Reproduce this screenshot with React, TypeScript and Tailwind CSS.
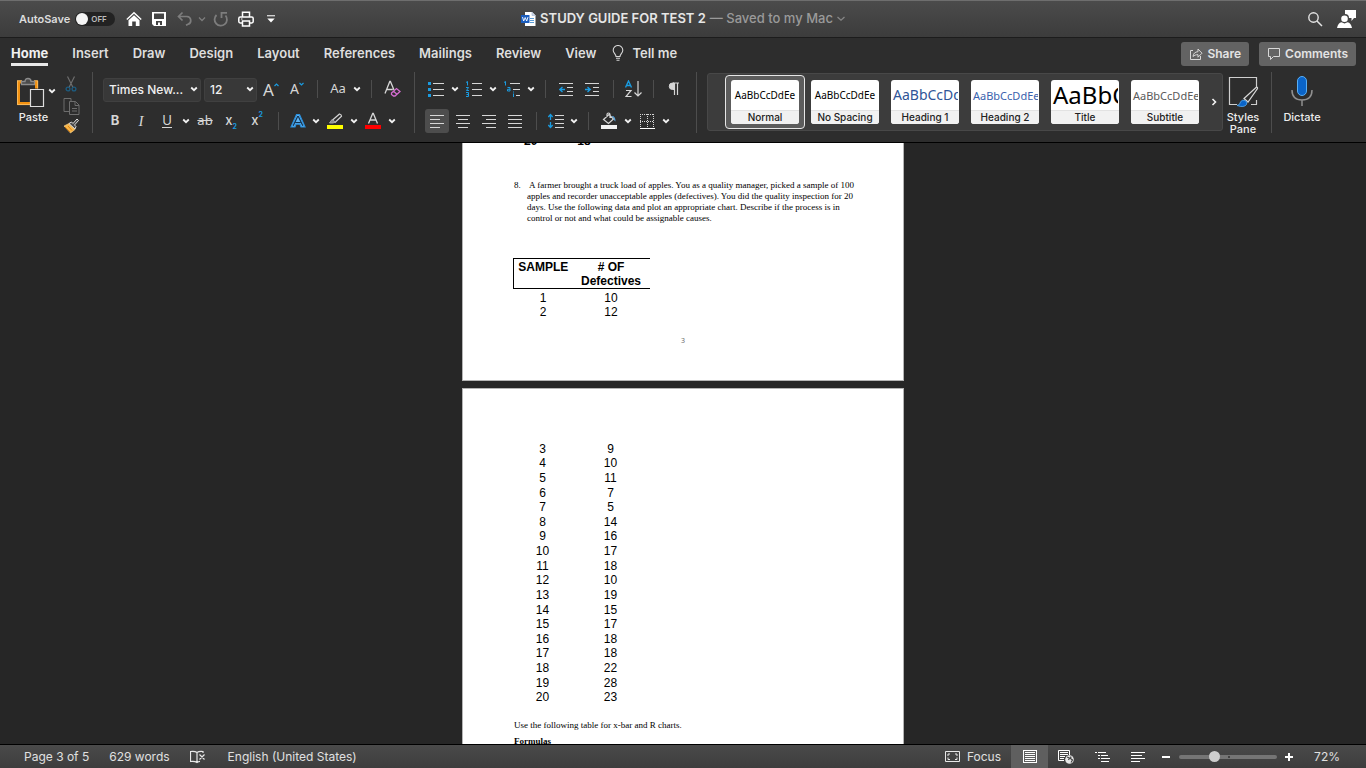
import { useState } from 'react'
import type { ReactNode } from 'react'
import clsx from 'clsx'

const tabs = ['Home', 'Insert', 'Draw', 'Design', 'Layout', 'References', 'Mailings', 'Review', 'View']

const styleCards = [
  { name: 'Normal', preview: 'text-[10px] text-black justify-center' },
  { name: 'No Spacing', preview: 'text-[10px] text-black justify-center' },
  { name: 'Heading 1', preview: 'text-[14px] text-[#2f5597] pl-px' },
  { name: 'Heading 2', preview: 'text-[11px] text-[#3a62ad] pl-px' },
  { name: 'Title', preview: 'text-[24px] text-black pl-px' },
  { name: 'Subtitle', preview: 'text-[11px] text-[#5a5a5a] pl-px' },
]

const firstRows = [[1, 10], [2, 12]]

const secondRows = [
  [3, 9], [4, 10], [5, 11], [6, 7], [7, 5], [8, 14], [9, 16], [10, 17], [11, 18],
  [12, 10], [13, 19], [14, 15], [15, 17], [16, 18], [17, 18], [18, 22], [19, 28], [20, 23],
]

interface IIconProps {
  w?: number
  h?: number
  crisp?: boolean
  children: ReactNode
}

const Icon = ({ w = 16, h = 16, crisp, children }: IIconProps) => (
  <svg
    width={w}
    height={h}
    viewBox={`0 0 ${w} ${h}`}
    fill="none"
    stroke="currentColor"
    shapeRendering={crisp ? 'crispEdges' : 'auto'}
    className="shrink-0"
    aria-hidden="true"
  >
    {children}
  </svg>
)

interface IToolProps {
  label: string
  className?: string
  children: ReactNode
}

const Tool = ({ label, className, children }: IToolProps) => (
  <button
    type="button"
    aria-label={label}
    title={label}
    className={clsx('flex h-6 shrink-0 items-center justify-center text-[#d6d6d6]', className ?? 'w-[26px]')}
  >
    {children}
  </button>
)

const CaretIcon = () => (
  <Icon w={8} h={6}>
    <path d="M1.2 1.5 4 4.2 6.8 1.5" stroke="#f2f2f2" strokeWidth="1.8" />
  </Icon>
)

const Caret = ({ label }: { label: string }) => (
  <Tool label={label} className="w-3"><CaretIcon /></Tool>
)

const Divider = () => (
  <div className="flex h-[18px] w-4 shrink-0 justify-center"><div className="w-px bg-[#4d4d4d]" /></div>
)

const GroupDivider = () => <div className="h-[61px] w-px shrink-0 bg-[#4d4d4d]" />

// horizontal text lines, each one as [x1, x2]
const Lines = ({ rows, gap = 4, top = 2 }: { rows: number[][]; gap?: number; top?: number }) => (
  <>
    {rows.map(([a, b], i) => (
      <path key={i} d={`M${a} ${top + 0.5 + i * gap}H${b}`} />
    ))}
  </>
)

const WordIcon = () => (
  <Icon w={15} h={16}>
    <path d="M4 1h7l3.5 3.5V15H4z" fill="#fff" stroke="none" />
    <path d="M11 1v3.5h3.5" fill="#cfd8e6" stroke="#9fb4d4" strokeWidth=".6" />
    <path d="M9 7.5h4M9 9.5h4M9 11.5h4" stroke="#5b9bd5" />
    <path d="M0 4h8.5v8H0z" fill="#1b5dbe" stroke="none" />
    <path d="m1.5 6 1.2 4L4.2 6.5 5.7 10 7 6" stroke="#fff" strokeWidth=".9" />
  </Icon>
)

const TitleBar = () => {
  const [autoSave, setAutoSave] = useState(false)
  return (
    <header className="grid h-[38px] shrink-0 grid-cols-[1fr_auto_1fr] items-center border-t border-b border-t-[#6e6e6e] border-b-[#1c1c1c] bg-linear-to-b from-[#4b4b4b] to-[#3c3c3c]">
      <div className="flex items-center pl-[19px] text-white">
        <label htmlFor="autosave" className="text-[11px] font-semibold text-[#dcdcdc]">AutoSave</label>
        <div className="relative ml-[5px] flex h-[14px] w-10 items-center">
          <input
            id="autosave"
            type="checkbox"
            role="switch"
            checked={autoSave}
            onChange={(e) => setAutoSave(e.target.checked)}
            className="h-[14px] w-10 appearance-none rounded-full bg-[#222]"
          />
          <span className="pointer-events-none absolute left-px size-3 rounded-full bg-[#f4f4f4]" />
          <span className="pointer-events-none absolute left-4 text-[8px] font-semibold text-[#bdbdbd]">{autoSave ? 'ON' : 'OFF'}</span>
        </div>
        <div className="ml-[9px] flex items-center">
          <Tool label="Home" className="w-5">
            <Icon>
              <path d="M.8 8.5 8 1.8l7.2 6.700" stroke="#fff" strokeWidth="1.5" />
              <path d="M2.5 9.3 8 4.3l5.5 5V15H9.8v-4.5H6.2V15H2.5z" fill="#fff" stroke="none" />
            </Icon>
          </Tool>
          <Tool label="Save" className="ml-[5px] w-5">
            <Icon w={14} h={14}>
              <path d="M0 0h14v14H2l-2-2zM2 1.5V7h10V1.5zM4 9v4h2v-2.500h2V13h2V9z" fill="#fff" fillRule="evenodd" stroke="none" />
            </Icon>
          </Tool>
          <Tool label="Undo" className="ml-[6px] w-5">
            <Icon>
              <path d="M5.5 1.5 1.5 5.5l4 4M1.5 5.5H10a4 4 0 0 1 1 7.8l-2 1" stroke="#7d7d7d" strokeWidth="1.7" />
            </Icon>
          </Tool>
          <Tool label="Undo options" className="w-[14px]">
            <Icon w={8} h={6}><path d="M1 1.5 4 4.5l3-3" stroke="#7d7d7d" strokeWidth="1.3" /></Icon>
          </Tool>
          <Tool label="Repeat" className="ml-[2px] w-5">
            <Icon>
              <path d="M3.5 4A6.2 6.2 0 1 0 12.5 4.5M8.5 7V1.8H14" stroke="#7d7d7d" strokeWidth="1.8" />
            </Icon>
          </Tool>
          <Tool label="Print" className="ml-[5px] w-5">
            <Icon>
              <path d="M4.5 6V1.2h7V6M4.5 12H2.2Q.8 12 .8 10.6V7.4Q.8 6 2.2 6h11.6q1.4 0 1.4 1.4v3.2q0 1.4-1.4 1.4h-2.300M4.5 10h7v5h-7z" stroke="#fff" strokeWidth="1.5" />
              <path d="M3 8h1.5" stroke="#fff" />
            </Icon>
          </Tool>
          <Tool label="Customize toolbar" className="ml-[5px] w-5">
            <Icon w={8} h={8}>
              <path d="M0 .7h8" stroke="#d0d0d0" strokeWidth="1.4" />
              <path d="M.3 3.5h7.4L4 7.6z" fill="#fff" stroke="none" />
            </Icon>
          </Tool>
        </div>
      </div>
      <button type="button" className="flex items-center text-[13px] whitespace-nowrap">
        <WordIcon />
        <span className="ml-1 font-semibold text-[#e6e6e6]">STUDY GUIDE FOR TEST 2</span>
        <span className="mx-1 font-medium text-[#9a9a9a]">— Saved to my Mac</span>
        <Icon w={8} h={6}><path d="M.5 1 4 4.2 7.5 1" stroke="#858585" strokeWidth="1.3" /></Icon>
      </button>
      <div className="flex items-center justify-end pr-[9px]">
        <Tool label="Search">
          <Icon>
            <circle cx="6.5" cy="6.5" r="4.7" stroke="#e4e4e4" strokeWidth="1.4" />
            <path d="m10 10 5 5" stroke="#e4e4e4" strokeWidth="1.5" />
          </Icon>
        </Tool>
        <Tool label="Account" className="ml-[7px] w-[22px]">
          <Icon w={20} h={20}>
            <path d="M9 1h11v8h-2l-2.5 3V9H13a4 4 0 0 0-4-4z" fill="#fff" stroke="none" />
            <circle cx="8.5" cy="9.8" r="3.3" fill="#fff" stroke="none" />
            <path d="M1 19q1-5.3 4.500-5.8l3 1.3 3-1.3Q15 13.7 16 19z" fill="#fff" stroke="none" />
          </Icon>
        </Tool>
      </div>
    </header>
  )
}

const TabBar = () => {
  const [active, setActive] = useState('Home')
  const box = 'flex h-6 items-center gap-1 rounded-[3px] bg-[#636363] px-2 text-[12px] font-semibold text-[#e4e4e4]'
  return (
    <nav className="flex h-[34px] shrink-0 items-start justify-between pr-[10px] pl-[11px]">
      <div className="flex gap-6 pt-1 text-[13px] leading-5 font-semibold text-[#dedede]">
        {tabs.map((tab) => (
          <button
            key={tab}
            type="button"
            onClick={() => setActive(tab)}
            className={clsx('h-6 border-b-[3px]', active === tab ? 'border-[#e8e8e8] font-bold text-[#f0f0f0]' : 'border-transparent')}
          >
            {tab}
          </button>
        ))}
        <button type="button" className="-ml-2 flex h-6 items-center gap-2 pb-[3px]">
          <Icon w={12} h={16}>
            <path d="M4 11.5C4 9 1.2 8.2 1.2 5.3a4.8 4.8 0 0 1 9.6 0C10.8 8.2 8 9 8 11.5zM4 13.3h4M4.5 15.2h3" stroke="#d6d6d6" strokeWidth="1.1" />
          </Icon>
          Tell me
        </button>
      </div>
      <div className="flex gap-[10px] pt-1">
        <button type="button" className={box}>
          <Icon w={14} h={14}>
            <path d="M4 3.5H1.5v9h10V9M4 9.5c.3-3 2-4.6 5-4.8V2l4 4.2-4 4V7.7C7 7.6 5.2 8.2 4 9.5z" stroke="#d8d8d8" />
          </Icon>
          Share
        </button>
        <button type="button" className={box}>
          <Icon w={14} h={14}><path d="M1.500 1.5h11v8h-6l-3 3v-3h-2z" stroke="#d8d8d8" /></Icon>
          Comments
        </button>
      </div>
    </nav>
  )
}

const Picker = ({ label, value, className }: { label: string; value: string; className: string }) => (
  <div className={clsx('relative shrink-0', className)}>
    <select
      aria-label={label}
      defaultValue={value}
      className="h-6 w-full appearance-none rounded-[3px] border border-[#404040] bg-[#383838] pl-[5px] text-[12px] font-medium text-[#f0f0f0]"
    >
      <option>{value}</option>
    </select>
    <span className="pointer-events-none absolute inset-y-0 right-[3px] flex items-center"><CaretIcon /></span>
  </div>
)

const ClipboardGroup = () => (
  <div className="flex w-[92px] shrink-0 pl-[14px]">
    <button type="button" className="flex w-[39px] flex-col items-center text-[11px] leading-3 font-medium text-[#ececec]">
      <span className="flex h-[39px] w-full pt-[5px] pl-[3px]">
        <Icon w={28} h={30}>
          <path d="M5 5H1.500v21.500H13M17 5h2.500v6.500" stroke="#f29111" strokeWidth="3" />
          <path d="M.4 3.500v24.100H13M.4 3.800H5M17 3.800h3.700v7.700" stroke="#ffc873" strokeWidth=".8" />
          <path d="M4.500 7.500v-3H8q0-3 3-3t3 3h3.500v3z" fill="#4a4a4a" stroke="#8c8c8c" strokeWidth="1.300" />
          <path d="M13.500 12.500h13v17h-13z" fill="#2d2d2d" stroke="#dedede" strokeWidth="1.200" />
        </Icon>
      </span>
      Paste
    </button>
    <div className="-ml-[7px] pt-[7px]"><Caret label="Paste options" /></div>
    <div className="ml-[3px] flex w-5 flex-col items-center pt-px">
      <Tool label="Cut" className="h-[22px] w-5">
        <Icon w={12} h={16}>
          <path d="M2.500.5 8 11.500M9.500.5 4 11.500" stroke="#6d6d6d" strokeWidth="1.200" />
          <circle cx="3" cy="13" r="1.900" stroke="#1d5c80" strokeWidth="1.300" />
          <circle cx="9" cy="13" r="1.900" stroke="#1d5c80" strokeWidth="1.300" />
        </Icon>
      </Tool>
      <Tool label="Copy" className="h-[22px] w-5">
        <Icon w={17} h={17}>
          <path d="M6 13.500H1V.5h7v3M6.500 3.500h6l3.500 3.500v9.500H6.500zM12 3.500v4h4M9 10.500h5M9 13h5" stroke="#6d6d6d" />
        </Icon>
      </Tool>
      <Tool label="Format painter" className="h-[18px] w-5">
        <Icon>
          <path d="M1 8 6 5.500l6 6L7.500 15z" fill="#f7b64a" stroke="#ffd894" strokeWidth=".6" />
          <path d="m2 9 5 5M5 8l4 4.500" stroke="#d97f10" />
          <path d="M6 5.500 8.500 4 10 5.500 14 1l1.500 1.500L11.500 7 13 8.500 12 11z" fill="#4a4a4a" stroke="#dcdcdc" />
        </Icon>
      </Tool>
    </div>
  </div>
)

const letter = 'font-["Noto_Sans"]'

const FontGroup = () => (
  <div className="w-[321px] shrink-0 pt-px pl-[9px]">
    <div className="flex h-8 items-center pl-px">
      <Picker label="Font" value="Times New..." className="w-[98px]" />
      <Picker label="Font size" value="12" className="ml-[3px] w-[53px]" />
      <Tool label="Increase font size" className="w-7">
        <span className={clsx(letter, 'text-[17px] leading-none')}>A</span>
        <Icon w={5} h={14}><path d="m.5 4 2-2 2 2" stroke="#1a9be0" strokeWidth="1.200" /></Icon>
      </Tool>
      <Tool label="Decrease font size" className="w-6">
        <span className={clsx(letter, 'text-[14px] leading-none')}>A</span>
        <Icon w={5} h={14}><path d="m.5 1 2 2 2-2" stroke="#1a9be0" strokeWidth="1.200" /></Icon>
      </Tool>
      <Divider />
      <Tool label="Change case"><span className={clsx(letter, 'text-[13px]')}>Aa</span></Tool>
      <Caret label="Change case options" />
      <Divider />
      <Tool label="Clear formatting">
        <Icon w={17} h={18}>
          <path d="M1 13.500 5.800 1.500h.6L10 10M2.800 9.500h6" strokeWidth="1.300" />
          <path d="m7.500 13 5-4.500 3.500 3-5 4.500H9.500l-2-1.500zM9.500 11.200l3.500 3" stroke="#d46cd0" strokeWidth="1.300" />
        </Icon>
      </Tool>
    </div>
    <div className="flex h-8 items-center">
      <Tool label="Bold"><span className="text-[13px] font-bold">B</span></Tool>
      <Tool label="Italic"><span className='font-["Liberation_Serif"] text-[15px] italic'>I</span></Tool>
      <Tool label="Underline"><span className="border-b border-[#d6d6d6] text-[13px] leading-[13px]">U</span></Tool>
      <Caret label="Underline options" />
      <Tool label="Strikethrough"><span className={clsx(letter, 'text-[13px] line-through')}>ab</span></Tool>
      <Tool label="Subscript">
        <span className="text-[13px] font-medium">x</span>
        <span className="pt-3 text-[7px] font-bold text-[#1a9be0]">2</span>
      </Tool>
      <Tool label="Superscript">
        <span className="text-[13px] font-medium">x</span>
        <span className="pb-3 text-[7px] font-bold text-[#1a9be0]">2</span>
      </Tool>
      <Divider />
      <Tool label="Text effects" className="w-6">
        <Icon w={16} h={16}>
          <path d="M1 14 6.500 1.500h3L15 14h-4l-1-2.800H6L5 14z" fill="#5db2f2" stroke="#2a8fdc" strokeWidth="1.200" />
          <path d="M3.200 12.700 7.600 3.500h.8l4.400 9.200M5.500 9.500h5" stroke="#12324f" strokeWidth="1.200" />
        </Icon>
      </Tool>
      <Caret label="Text effects options" />
      <Tool label="Highlight">
        <Icon w={16} h={18}>
          <path d="M5 8.500 12.500 2q2 .5 2 2.200L8 10.500z" stroke="#d6d6d6" strokeWidth="1.200" />
          <path d="M5 7.500 2.500 11H6l2.500-1z" fill="#8c8c8c" stroke="#a8a8a8" />
          <path d="M0 13h16v4H0z" fill="#ffff00" stroke="none" />
        </Icon>
      </Tool>
      <Caret label="Highlight options" />
      <Tool label="Font color">
        <Icon w={16} h={18}>
          <path d="M3.500 11.500 7.700 1.500h.6l4.200 10M5 8h6" strokeWidth="1.300" />
          <path d="M0 13h16v4H0z" fill="#ff0000" stroke="none" />
        </Icon>
      </Tool>
      <Caret label="Font color options" />
    </div>
  </div>
)

const ParagraphGroup = () => (
  <div className="w-[281px] shrink-0 pt-px pl-[8px]">
    <div className="flex h-8 items-center">
      <Tool label="Bullets">
        <Icon crisp>
          <Lines rows={[[5, 16], [5, 16], [5, 16]]} gap={6} />
          <path d="M0 1h3v3H0zM0 7h3v3H0zM0 13h3v3H0z" fill="#1a9be0" stroke="none" />
        </Icon>
      </Tool>
      <Caret label="Bullets options" />
      <Tool label="Numbering">
        <Icon>
          <Lines rows={[[6, 16], [6, 16], [6, 16]]} gap={6} />
          <path d="m0 1.500 1.500-1V4.500M0 6.500h2.500L.5 9.500h2.500M0 11.500h2.500v4H0M.5 13.500h2" stroke="#1a9be0" />
        </Icon>
      </Tool>
      <Caret label="Numbering options" />
      <Tool label="Multilevel list">
        <Icon>
          <path d="M6 2.500h10M9 8.500h7M12 14.500h4" />
          <path d="M0 1.500 1.500.5V4.500M3.500 6.500H6v3.500H3.500V8.300H6M9.500 12.500v4M9.500 10.500v1" stroke="#1a9be0" />
        </Icon>
      </Tool>
      <Caret label="Multilevel list options" />
      <Divider />
      <Tool label="Decrease indent">
        <Icon w={14} h={14}>
          <path d="M0 1.500h14M8 5.500h6M8 9.500h6M0 13.500h14" />
          <path d="M.8 7.500H6M3.500 5 .8 7.500l2.700 2.500" stroke="#1a9be0" strokeWidth="1.400" />
        </Icon>
      </Tool>
      <Tool label="Increase indent">
        <Icon w={14} h={14}>
          <path d="M0 1.500h14M8 5.500h6M8 9.500h6M0 13.500h14" />
          <path d="M0 7.500h5.200M2.500 5l2.700 2.500L2.500 10" stroke="#1a9be0" strokeWidth="1.400" />
        </Icon>
      </Tool>
      <Divider />
      <Tool label="Sort" className="w-6">
        <Icon w={17} h={18}>
          <path d="M.5 7.500 3.500 1l3 6.500M1.500 5.500h4" stroke="#1a9be0" strokeWidth="1.400" />
          <path d="M1 10.500h5l-5 6h5.500" strokeWidth="1.200" />
          <path d="M13 1v15M9.500 12.500 13 16l3.500-3.500" strokeWidth="1.200" />
        </Icon>
      </Tool>
      <Divider />
      <Tool label="Show paragraph marks">
        <Icon w={12} h={14}>
          <path d="M5 1h6M6.500 1v12M9.500 1v12" strokeWidth="1.200" />
          <path d="M6 1v6.500H4.500a3.200 3.200 0 0 1 0-6.500z" fill="currentColor" />
        </Icon>
      </Tool>
    </div>
    <div className="flex h-8 items-center pl-px">
      <Tool label="Align left" className="mx-px w-6 rounded-[3px] bg-[#4d4d4d]">
        <Icon w={14} h={16} crisp><Lines rows={[[0, 14], [0, 10], [0, 14], [0, 10]]} /></Icon>
      </Tool>
      <Tool label="Center">
        <Icon w={14} h={16} crisp><Lines rows={[[0, 14], [2, 12], [0, 14], [2, 12]]} /></Icon>
      </Tool>
      <Tool label="Align right">
        <Icon w={14} h={16} crisp><Lines rows={[[0, 14], [4, 14], [0, 14], [4, 14]]} /></Icon>
      </Tool>
      <Tool label="Justify">
        <Icon w={14} h={16} crisp><Lines rows={[[0, 14], [0, 14], [0, 14], [0, 14]]} /></Icon>
      </Tool>
      <Divider />
      <Tool label="Line spacing" className="w-6">
        <Icon>
          <Lines rows={[[7, 16], [7, 16], [7, 16], [7, 16]]} />
          <path d="M2.500 1.500V7M.3 4l2.200-2.500L4.700 4M2.500 9v5.500M.3 12l2.200 2.500L4.700 12" stroke="#1a9be0" strokeWidth="1.300" />
        </Icon>
      </Tool>
      <Caret label="Line spacing options" />
      <Divider />
      <Tool label="Shading">
        <Icon w={16} h={18}>
          <path d="m2.500 7.500 5.500-5 4.500 4.500-5 4.500zM6 5V2.500Q6 1 7.500 1t1.500 1.500V6" stroke="#d6d6d6" strokeWidth="1.200" />
          <path d="M10.500 4q4-.5 4 5.500-2-.5-2-3.500z" fill="#5aa5dc" stroke="none" />
          <path d="M0 13h16v4H0z" fill="#f2f2f2" stroke="none" />
        </Icon>
      </Tool>
      <Caret label="Shading options" />
      <Tool label="Borders">
        <Icon crisp>
          <path d="M1 1.500h14M1 8.500h14M1.500 1v13M8.500 1v13M14.500 1v13" strokeDasharray="1 1" />
          <path d="M1 15.500h15" stroke="#fff" />
        </Icon>
      </Tool>
      <Caret label="Borders options" />
    </div>
  </div>
)

const StylesGallery = () => {
  const [selected, setSelected] = useState('Normal')
  return (
    <div className="mt-px ml-[10px] flex h-[58px] shrink-0 items-center rounded-[3px] border border-[#484848] bg-[#3c3c3c] pl-[17px]">
      {styleCards.map((card) => (
        <button
          key={card.name}
          type="button"
          onClick={() => setSelected(card.name)}
          className={clsx(
            'h-[54px] w-20 rounded-[4px] border p-1',
            selected === card.name ? 'border-[#e6e6e6] bg-[#5c5c5c]' : 'border-transparent',
          )}
        >
          <span className="mx-px flex h-full flex-col overflow-hidden rounded-[3px] bg-white">
            <span className={clsx('mx-px flex flex-1 items-center overflow-hidden font-["Noto_Sans"] leading-none', card.preview)}>
              AaBbCcDdEe
            </span>
            <span className="h-[14px] border-t border-[#e2e2e2] bg-[#f1f1f1] text-center text-[10px] leading-3 font-medium text-[#222]">
              {card.name}
            </span>
          </span>
        </button>
      ))}
      <Tool label="More styles" className="w-[17px]">
        <Icon w={6} h={8}><path d="m1.500 1 3 3-3 3" stroke="#f2f2f2" strokeWidth="1.600" /></Icon>
      </Tool>
    </div>
  )
}

const Ribbon = () => (
  <div className="flex h-[71px] shrink-0 items-start overflow-hidden border-b border-black">
    <ClipboardGroup />
    <GroupDivider />
    <FontGroup />
    <GroupDivider />
    <ParagraphGroup />
    <GroupDivider />
    <StylesGallery />
    <button type="button" className="flex w-[40px] shrink-0 flex-col items-center pt-1 text-[11px] leading-3 font-medium text-[#ececec]">
      <Icon w={32} h={35}>
        <path d="M29.500 14V1.500h-27v27H10M24 28.500h5.500V24" stroke="#cfcfcf" strokeWidth="1.200" />
        <path d="m17 22.500 12-11q1.800-.8 1.500 1L21 26z" fill="#2d2d2d" stroke="#d8d8d8" strokeWidth="1.200" />
        <path d="M10 29.500q3-.5 3.500-3.500 1.500-3 4.500-1.500t1.500 4q-2.500 3.500-9.500 1z" fill="#0a64c8" stroke="#58aef5" strokeWidth=".8" />
      </Icon>
      <span>Styles<br />Pane</span>
    </button>
    <div className="ml-[8px] flex"><GroupDivider /></div>
    <button type="button" className="flex w-[60px] shrink-0 flex-col items-center pt-1 text-[11px] leading-3 font-medium text-[#ececec]">
      <Icon w={22} h={35}>
        <rect x="6.500" y=".5" width="9" height="19" rx="4.500" fill="#0a64c8" stroke="#58aef5" />
        <path d="M1 14q0 10 10 10t10-10M11 24v6" stroke="#8f8f8f" strokeWidth="1.500" />
      </Icon>
      Dictate
    </button>
  </div>
)

const Rows = ({ rows }: { rows: number[][] }) => (
  <tbody>
    {rows.map(([sample, count]) => (
      <tr key={sample}>
        <td className="p-0">{sample}</td>
        <td className="p-0">{count}</td>
      </tr>
    ))}
  </tbody>
)

const Columns = () => (
  <colgroup>
    <col className="w-[59px]" />
    <col className="w-[77px]" />
  </colgroup>
)

const sheet = 'w-[442px] max-w-full shrink-0 border border-[#b4b4b4] bg-white px-[51px] text-black'
const arial = 'font-["Liberation_Sans",sans-serif] text-[12px] leading-[14px]'
const dataTable = '-ml-px w-[136px] table-fixed border-collapse text-center'

const Document = () => (
  <main className="flex min-h-0 flex-1 flex-col items-center gap-[7px] overflow-hidden bg-[#262626]">
    <section className={clsx(sheet, 'border-t-0 pb-[35px]')}>
      <div className={clsx('flex h-[2px] items-end gap-10 overflow-hidden pl-[10px] font-bold', arial)}>
        <span className="-mb-[3px]">20</span>
        <span className="-mb-[3px]">18</span>
      </div>
      <div className='mt-[35px] flex font-["Liberation_Serif",serif] text-[9px] leading-[11px] whitespace-nowrap'>
        <span className="w-[13px] shrink-0">8.</span>
        <p className="indent-[2px]">
          A farmer brought a truck load of apples. You as a quality manager, picked a sample of 100<br />
          apples and recorder unacceptable apples (defectives). You did the quality inspection for 20<br />
          days. Use the following data and plot an appropriate chart. Describe if the process is in<br />
          control or not and what could be assignable causes.
        </p>
      </div>
      <table className={clsx('mt-[34px]', dataTable, arial)}>
        <Columns />
        <thead>
          <tr className="border-y border-l border-black align-top">
            <th className="p-0 pt-px">SAMPLE</th>
            <th className="p-0 pt-px"># OF Defectives</th>
          </tr>
          <tr aria-hidden="true"><td colSpan={2} className="h-[2px] p-0" /></tr>
        </thead>
        <Rows rows={firstRows} />
      </table>
      <p className='mt-[18px] text-center font-["Open_Sans",sans-serif] text-[7px] leading-[8px] text-[#666]'>3</p>
    </section>
    <section className={clsx(sheet, 'flex-1 pt-[53px]')}>
      <table className={clsx('h-[263px]', dataTable, arial)}>
        <Columns />
        <Rows rows={secondRows} />
      </table>
      <div className='mt-[15px] font-["Liberation_Serif",serif] text-[9px] leading-[11px]'>
        <p>Use the following table for x-bar and R charts.</p>
        <p className="mt-[5px] font-bold">Formulas</p>
      </div>
    </section>
  </main>
)

const StatusBar = () => {
  const [zoom, setZoom] = useState(72)
  return (
    <footer className="flex h-6 shrink-0 items-center justify-between border-t border-black bg-linear-to-b from-[#4a4a4a] to-[#3d3d3d] pl-6 text-[12px] text-[#e0e0e0]">
      <div className="flex items-center gap-5">
        <span>Page 3 of 5</span>
        <span>629 words</span>
        <button type="button" aria-label="Proofing" className="w-[18px]">
          <Icon w={16} h={14}>
            <path d="M7 12.500V2.500Q5 1 .5 1.500v10Q5 11 7 12.500 8.500 11.500 10 11.300M7 2.500Q9 1 13 1.500v1.500M9.500 4.500l5 5M14.500 4.500l-5 5" stroke="#e8e8e8" strokeWidth="1.200" />
          </Icon>
        </button>
        <span>English (United States)</span>
      </div>
      <div className="flex h-full items-center pr-[26px]">
        <button type="button" className="flex items-center gap-[6px] pr-[10px]">
          <Icon w={16} h={12}>
            <path d="M.5.5h14v10H.5z" stroke="#e8e8e8" />
            <path d="M3 5V3h2M10 3h2v2M12 6.500v2h-2M5 8.500H3v-2" stroke="#e8e8e8" />
          </Icon>
          Focus
        </button>
        <Tool label="Print layout" className="h-full w-[37px] bg-[#5f5f5f]">
          <Icon w={14} h={13} crisp>
            <path d="M.5.5h13v12H.5zM2 2.500h10M2 4.500h10M2 6.500h10M2 8.500h10M2 10.500h10" stroke="#fff" />
          </Icon>
        </Tool>
        <Tool label="Web layout" className="w-9">
          <Icon w={16} h={14}>
            <path d="M6 10.500H.5V.5h11V5M2 2.500h8M2 4.500h8M2 6.500h5M2 8.500h4" stroke="#fff" />
            <circle cx="11.500" cy="9.500" r="4.300" fill="#e8e8e8" stroke="none" />
            <path d="m9 7 2.500 1-1 2M13 6.500l-.5 2 2 1.500-1.500 2.500" stroke="#444" strokeWidth="1.200" />
          </Icon>
        </Tool>
        <Tool label="Outline" className="w-9">
          <Icon w={15} h={12} crisp>
            <path d="M0 1.500h2M3 1.500h8M3 4.500h2M6 4.500h7M3 7.500h2M6 7.500h9M6 10.500h8" stroke="#fff" />
          </Icon>
        </Tool>
        <Tool label="Draft" className="w-9">
          <Icon w={14} h={12} crisp>
            <path d="M0 1.500h14M0 4.500h11M0 7.500h14M0 10.500h9" stroke="#fff" />
          </Icon>
        </Tool>
        <Tool label="Zoom out" className="w-5">
          <Icon w={8} h={8} crisp><path d="M0 4h8" stroke="#fff" strokeWidth="2" /></Icon>
        </Tool>
        <div className="relative mx-[3px] flex w-[98px] items-center">
          <input
            type="range"
            aria-label="Zoom"
            min={21}
            max={171}
            value={zoom}
            onChange={(e) => setZoom(Number(e.target.value))}
            className="h-1 w-full appearance-none rounded-full bg-[#757575] [&::-webkit-slider-thumb]:size-[11px] [&::-webkit-slider-thumb]:appearance-none [&::-webkit-slider-thumb]:rounded-full [&::-webkit-slider-thumb]:bg-[#cdcdcd]"
          />
          <span className="pointer-events-none absolute left-1/2 size-[2px] rounded-full bg-[#333]" />
        </div>
        <Tool label="Zoom in" className="w-[18px]">
          <Icon w={8} h={8} crisp><path d="M0 4h8M4 0v8" stroke="#fff" strokeWidth="2" /></Icon>
        </Tool>
        <span className="w-[42px] text-right">{zoom}%</span>
      </div>
    </footer>
  )
}

export default function App() {
  return (
    <div className='flex h-screen flex-col overflow-hidden bg-[#2d2d2d] font-["Inter","Liberation_Sans",sans-serif]'>
      <TitleBar />
      <TabBar />
      <Ribbon />
      <Document />
      <StatusBar />
    </div>
  )
}
